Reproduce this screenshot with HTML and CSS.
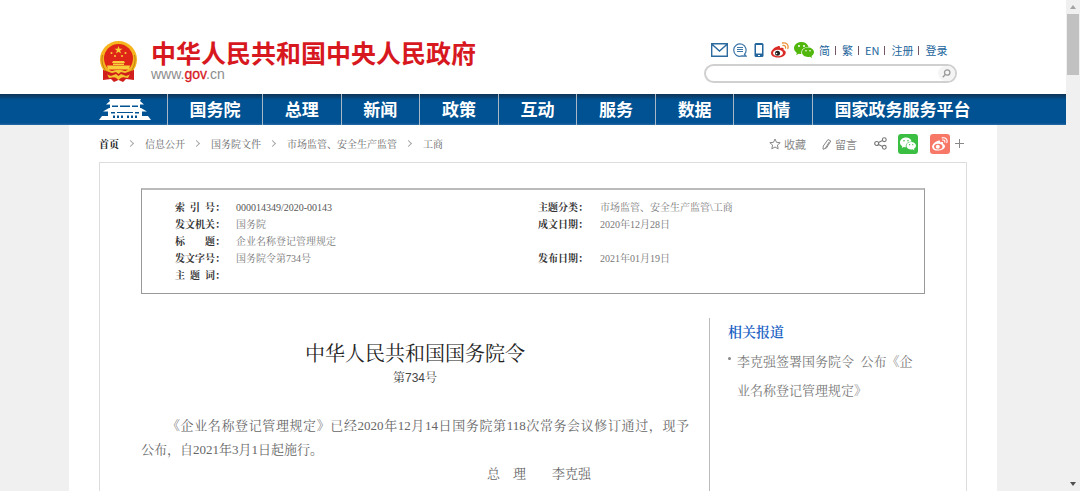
FILE: index.html
```html
<!DOCTYPE html>
<html lang="zh-CN">
<head>
<meta charset="utf-8">
<title>企业名称登记管理规定</title>
<link rel="stylesheet" href="styles.css">
</head>
<body>
<svg class="defs" aria-hidden="true">
  <symbol id="wechat" viewBox="0 0 20 16">
    <path fill="currentColor" fill-rule="evenodd" d="M7.5 0C3.3 0 0 2.7 0 6.1c0 2 1.1 3.7 2.8 4.8L2.2 13l2.6-1.3c.9.2 1.7.3 2.6.3C6.600 8 9.500 5 14.600 4.900 13.700 2 10.900 0 7.500 0ZM5 3a1 1 0 1 1 0 2 1 1 0 0 1 0-2Zm5 0a1 1 0 1 1 0 2 1 1 0 0 1 0-2Z"/>
    <path fill="currentColor" fill-rule="evenodd" d="M14 5.600c-3.300 0-6 2.100-6 4.700S10.700 15 14 15c.7 0 1.300-.1 1.900-.3L18 16l-.5-2c1.500-.9 2.500-2.200 2.500-3.700 0-2.600-2.700-4.700-6-4.700ZM12 8a.8.8 0 1 1 0 1.600A.8.8 0 0 1 12 8Zm4 0a.8.8 0 1 1 0 1.600A.8.8 0 0 1 16 8Z"/>
  </symbol>
</svg>
<div class="window">
  <div class="page">
    <header class="header">
      <div class="header-inner">
        <a class="brand" href="#">
          <svg class="emblem" viewBox="0 0 39 42" aria-hidden="true">
            <path fill="#d01f1c" d="M4 26v13l8-1 3 3 4.500-2 4.500 2 3-3 8 1V26Z"/>
            <circle cx="19.500" cy="18.500" r="18.500" fill="#f6b51e"/>
            <circle cx="19.500" cy="17.500" r="14.500" fill="#df2418"/>
            <path fill="#f8cf3a" d="m19.500 5 1 2.700h3l-2.400 1.800.9 2.900-2.500-1.700-2.500 1.700.9-2.900-2.400-1.800h3Z"/>
            <g fill="#f8cf3a"><circle cx="12.500" cy="12" r="1"/><circle cx="16" cy="15" r="1"/><circle cx="23" cy="15" r="1"/><circle cx="26.500" cy="12" r="1"/>
            <path d="M14 20h11l1 2H13Zm0 2.500h11v1.500H14Zm-6 2h23l-1 4H9Z"/></g>
            <path fill="none" stroke="#b98212" d="M3.500 14C1.500 22 5 31 13 34M35.500 14c2 8-1.500 17-9.500 20"/>
            <path fill="#f4c431" d="M7 31c5 0 7-2 12.500-2S27 31 32 31l-3 6-6-1-3.500 3-3.500-3-6 1Z"/>
            <path fill="#d01f1c" d="m4 29 9 3 4-1 2.500 2 2.500-2 4 1 9-3v3l-8 3-5-2-2.500 2-2.500-2-5 2-8-3Z"/>
          </svg>
          <span class="brand-text">
            <span class="brand-name">中华人民共和国中央人民政府</span>
            <span class="brand-url">www.<b>gov</b>.cn</span>
          </span>
        </a>
        <div class="tools">
          <div class="tool-links">
            <a href="#" aria-label="邮箱"><svg width="17" height="14" viewBox="0 0 17 14" fill="none" stroke="#2d6b9f" stroke-width="1.400"><path d="M.7.7h15.600v12.600H.7Zm.5.800 7.300 6.500 7.300-6.500"/></svg></a>
            <a href="#" aria-label="留言"><svg width="14" height="14" viewBox="0 0 14 14" fill="none" stroke="#3b76a8"><path stroke-width="1.200" d="M11.500 11.200A6.200 6.200 0 1 0 9 12.900L13 13Z"/><path d="M4 4.500h6M4 6.500h6M4 8.500h6"/></svg></a>
            <a class="phone" href="#" aria-label="客户端"><svg width="10" height="14" viewBox="0 0 10 14"><rect x=".5" width="9" height="14" rx="1.500" fill="#22659c"/><path fill="#fff" d="M2 2h6v8.500H2ZM4 12h2v1H4Z"/></svg></a>
            <a href="#" aria-label="微博"><svg width="18" height="16" viewBox="0 0 18 16"><path fill="#d92b25" d="M7 4.200c1.500-.6 2.600.1 2 2 2.500-1 4.300-.5 3.500 1.700 1.700.6 2.700 1.700 2.100 3.500-.8 2.500-4 4.100-7.600 4.100C3.200 15.500 0 14 0 11c0-2.500 3.500-6 7-6.800Z"/><ellipse cx="7" cy="11" rx="5" ry="3.300" fill="#fff"/><circle cx="6.500" cy="11.200" r="2.500" fill="#222"/><circle cx="5.500" cy="11.500" r=".8" fill="#fff"/><path fill="none" stroke="#eb9337" stroke-width="1.300" stroke-linecap="round" d="M11.500 1c4-.8 6.500 2 5.300 5.500M12 3.500c1.800-.3 2.900.7 2.500 2.500"/></svg></a>
            <a class="wechat-link" href="#" aria-label="微信"><svg width="20" height="16"><use href="#wechat"/></svg></a>
            <a href="#">简</a><i></i><a href="#">繁</a><i></i><a href="#">EN</a><i></i><a href="#">注册</a><i></i><a href="#">登录</a>
          </div>
          <form class="search">
            <input type="text" aria-label="搜索">
            <button type="button" aria-label="搜索"><svg width="9" height="9" viewBox="0 0 9 9" fill="none" stroke="#999" stroke-width="1.300"><circle cx="5.200" cy="3.500" r="2.700"/><path d="M3.300 5.500.8 8.200"/></svg></button>
          </form>
        </div>
      </div>
    </header>
    <nav class="nav">
      <div class="nav-inner">
        <a class="nav-home" href="#" aria-label="首页">
          <svg width="52" height="22" viewBox="0 0 52 22" fill="#fff"><path d="M10 0h32l-1 2 4 3.500H7L11 2ZM11 5h30v4.500H11ZM10 9h32l6 3.500H4ZM9 12h34v5H9ZM3 17h46l3 4H0Z"/><path fill="#005293" d="M13 6.500h6v1.500h-6Zm8 0h10v1.500H21Zm12 0h6v1.500h-6ZM12 13h4v1.500h-4Zm6 0h16v1H18Zm18 0h4v1.500h-4ZM14 16.500h2V19h-2Zm4 0h2V19h-2Zm4 0h2V19h-2Zm6 0h2V19h-2Zm4 0h2V19h-2Zm4 0h2V19h-2Z"/></svg>
        </a>
        <a href="#">国务院</a><a href="#">总理</a><a href="#">新闻</a><a href="#">政策</a><a href="#">互动</a><a href="#">服务</a><a href="#">数据</a><a href="#">国情</a><a href="#">国家政务服务平台</a>
      </div>
    </nav>
    <main class="main">
      <div class="bar">
        <div class="crumbs">
          <a class="crumb-home" href="#">首页</a><span class="chev"></span><a href="#">信息公开</a><span class="chev"></span><a href="#">国务院文件</a><span class="chev"></span><a href="#">市场监管、安全生产监管</a><span class="chev"></span><a href="#">工商</a>
        </div>
        <div class="share">
          <button type="button"><svg width="12" height="12" viewBox="0 0 12 12" fill="none" stroke="#888"><path d="m6 1 1.500 3.300 3.700.4-2.800 2.400.8 3.700L6 9l-3.200 1.800.8-3.700L.8 4.700l3.700-.4Z"/></svg>收藏</button>
          <button type="button" class="comment"><svg width="10" height="12" viewBox="0 0 10 12" fill="none" stroke="#888"><path d="M6 1.500 8.800 3 4.500 10 1 11.300 1.300 8Zm1.300 2.300L3.500 10"/></svg>留言</button>
          <button type="button" class="nodes" aria-label="分享"><svg width="13" height="13" viewBox="0 0 13 13" fill="none" stroke="#777" stroke-width="1.100"><circle cx="2.700" cy="6.500" r="2"/><circle cx="10.300" cy="2.700" r="1.900"/><circle cx="10.300" cy="10.300" r="1.900"/><path d="m4.500 5.600 4-2M4.500 7.400l4 2"/></svg></button>
          <button type="button" class="tile green" aria-label="微信"><svg width="16" height="14"><use href="#wechat"/></svg></button>
          <button type="button" class="tile red" aria-label="微博"><svg width="16" height="14" viewBox="0 0 18 16"><path fill="#fff" d="M7 4.200c1.500-.6 2.600.1 2 2 2.500-1 4.300-.5 3.500 1.700 1.700.6 2.700 1.700 2.100 3.500-.8 2.500-4 4.100-7.600 4.100C3.200 15.500 0 14 0 11c0-2.500 3.500-6 7-6.800Z"/><ellipse cx="7" cy="11" rx="4.800" ry="3.200" fill="#f87867"/><circle cx="6.500" cy="11.200" r="2.300" fill="#fff"/><path fill="none" stroke="#fff" stroke-width="1.300" stroke-linecap="round" d="M11.500 1c4-.8 6.500 2 5.300 5.500M12 3.500c1.800-.3 2.900.7 2.500 2.500"/></svg></button>
          <button type="button" class="plus" aria-label="更多"><svg width="9" height="9" viewBox="0 0 9 9" stroke="#888"><path d="M4.500 0v9M0 4.500h9"/></svg></button>
        </div>
      </div>
      <div class="sheet">
        <div class="meta">
          <table>
            <colgroup><col class="c-label"><col class="c-value"><col class="c-label2"><col></colgroup>
            <tr><th>索&nbsp;&nbsp;引&nbsp;&nbsp;号：</th><td class="dark">000014349/2020-00143</td><th>主题分类：</th><td>市场监管、安全生产监管\工商</td></tr>
            <tr><th>发文机关：</th><td>国务院</td><th>成文日期：</th><td>2020年12月28日</td></tr>
            <tr><th>标　　题：</th><td colspan="3">企业名称登记管理规定</td></tr>
            <tr><th>发文字号：</th><td>国务院令第734号</td><th>发布日期：</th><td>2021年01月19日</td></tr>
            <tr><th>主&nbsp;&nbsp;题&nbsp;&nbsp;词：</th><td colspan="3"></td></tr>
          </table>
        </div>
        <div class="columns">
          <article class="article">
            <h1>中华人民共和国国务院令</h1>
            <p class="number">第734号</p>
            <p class="text">《企业名称登记管理规定》已经2020年12月14日国务院第118次常务会议修订通过，现予<span class="keep">公布，</span>自2021年3月1日起施行。</p>
            <p class="sign">总　理　　李克强</p>
          </article>
          <aside class="related">
            <h2>相关报道</h2>
            <ul><li><a href="#">李克强签署国务院令&nbsp; 公布《企业名称登记管理规定》</a></li></ul>
          </aside>
        </div>
      </div>
    </main>
  </div>
  <div class="scrollbar" aria-hidden="true">
    <svg width="6" height="4" viewBox="0 0 6 4"><path fill="#a3a3a3" d="m3 0 3 4H0Z"/></svg>
    <div class="thumb"></div>
    <svg class="down" width="6" height="4" viewBox="0 0 6 4"><path fill="#505050" d="m3 4 3-4H0Z"/></svg>
  </div>
</div>
</body>
</html>
```

FILE: styles.css
```css
* { box-sizing: border-box; }
body, h1, h2, p, ul { margin: 0; padding: 0; }
body {
  font-family: "Liberation Serif", "Noto Serif CJK SC", "Noto Sans CJK SC", serif;
  font-size: 10px;
  color: #666;
  background: #fff;
}
a { color: inherit; text-decoration: none; }
svg { display: block; flex: none; }
button { border: 0; padding: 0; background: none; font: inherit; color: inherit; display: flex; align-items: center; }
.defs { position: absolute; width: 0; height: 0; }

.window { display: flex; height: 100vh; }
.page { flex: 1; min-width: 0; overflow: hidden; display: flex; flex-direction: column; background: #f0f0f0; }
.scrollbar { width: 14px; background: #f0f0f0; display: flex; flex-direction: column; align-items: center; padding: 5px 1px; }
.thumb { width: 100%; height: 61px; margin-top: 5px; background: #c1c1c1; }
.down { margin-top: auto; }

.header { background: #fff; }
.header-inner { max-width: 928px; margin: 0 auto; padding: 38px 40px 11px 30px; display: flex; justify-content: space-between; }
.brand { display: flex; gap: 13px; align-items: flex-start; }
.emblem { width: 39px; height: 42px; margin-top: 3px; }
.brand-text { display: flex; flex-direction: column; }
.brand-name { font: bold 25px/28px "Noto Sans CJK SC", sans-serif; color: #d7191f; white-space: nowrap; }
.brand-url { font: 14px/16px "Liberation Sans", sans-serif; color: #8c8c8c; }
.brand-url b { color: #d7191f; font-weight: normal; -webkit-text-stroke: 0.3px #d7191f; }

.tools { width: 253px; }
.tool-links { display: flex; align-items: center; gap: 5px; height: 24px; padding-left: 7px; font: 11px/24px "Noto Sans CJK SC", sans-serif; color: #22659c; white-space: nowrap; }
.tool-links i { width: 1px; height: 9px; margin-right: 1px; background: #735766; }
.phone { margin: 0 2px; }
.wechat-link { color: #51b70c; }
.search { display: flex; align-items: center; height: 19px; margin-top: 2px; border: 2px solid #d0d0d0; border-radius: 10px; background: #fff; }
.search input { flex: 1; min-width: 0; height: 100%; border: 0; padding: 0 8px; outline: 0; background: none; }
.search button { width: 17px; height: 15px; justify-content: center; border-radius: 8px; background: #f4f4f4; }

.nav { background: linear-gradient(#0c3354, #005293 6px, #005293 29px, #2a6ca5 31px); }
.nav-inner { max-width: 928px; margin: 0 auto; padding: 0 5px 0 30px; display: grid; grid-template-columns: 68px 95px repeat(7, 1fr) 180px; }
.nav a { height: 31px; border-left: 1px solid #a9b6c4; font: bold 17px/29px "Noto Sans CJK SC", sans-serif; color: #fff; text-align: center; white-space: nowrap; }
.nav .nav-home { border: 0; padding-top: 5px; }

.main { flex: 1 0 auto; width: 100%; max-width: 928px; margin: 0 auto; padding: 0 30px; background: #fff; }
.bar { display: flex; justify-content: space-between; align-items: center; height: 37px; }
.crumbs { display: flex; align-items: center; white-space: nowrap; }
.crumb-home { color: #222; font-weight: bold; }
.chev { width: 5px; height: 5px; margin: 0 12px 0 9px; border: solid #aaa; border-width: 1px 1px 0 0; transform: rotate(45deg); }
.share { display: flex; align-items: center; font: 11px/20px "Noto Sans CJK SC", sans-serif; color: #888; padding-right: 3px; }
.share button { gap: 3px; }
.comment { margin-left: 16px; }
.nodes { margin: 0 11px 0 17px; }
.share .tile { width: 20px; height: 20px; border-radius: 3px; justify-content: center; color: #fff; }
.green { background: #3bbf43; }
.share .red { background: #f87867; margin-left: 12px; }
.plus { margin-left: 5px; }

.sheet { border: 1px solid #ddd; border-bottom: 0; padding: 25px 41px 0; }
.meta { border: 1px solid #999; border-top: 2px solid #bbb; padding: 9px 33px; }
table { width: 100%; border-collapse: collapse; table-layout: fixed; }
.c-label { width: 61px; }
.c-value { width: 302px; }
.c-label2 { width: 62px; }
th, td { height: 17px; padding: 0; line-height: 17px; font-size: 10px; text-align: left; white-space: nowrap; }
th { color: #333; }
td { color: #777; }
.dark { color: #555; }

.columns { display: grid; grid-template-columns: 1fr 216px; padding-top: 24px; }
.article { padding: 22px 20px 0 0; }
h1 { font-size: 20px; line-height: 28px; font-weight: normal; color: #222; text-align: center; }
.number { font: 12px/20px "Liberation Sans", "Noto Serif CJK SC", "Noto Sans CJK SC", sans-serif; color: #444; text-align: center; }
.text { margin-top: 26px; font-size: 13px; line-height: 24px; text-indent: 2em; text-align: justify; }
.keep { white-space: nowrap; }
.sign { font-size: 13px; line-height: 24px; padding-right: 98px; text-align: right; }
.related { min-height: 180px; border-left: 1px solid #bbb; padding: 1px 0 0 18px; }
h2 { font-size: 14px; line-height: 28px; font-weight: 600; color: #1a62c4; }
.related ul { list-style: none; }
.related li { display: flex; gap: 6px; font-size: 13px; line-height: 29px; }
.related li::before { content: ""; flex: none; width: 3px; height: 3px; margin-top: 10px; border-radius: 50%; background: #888; }
.related li a { color: #777; max-width: 184px; }
```
